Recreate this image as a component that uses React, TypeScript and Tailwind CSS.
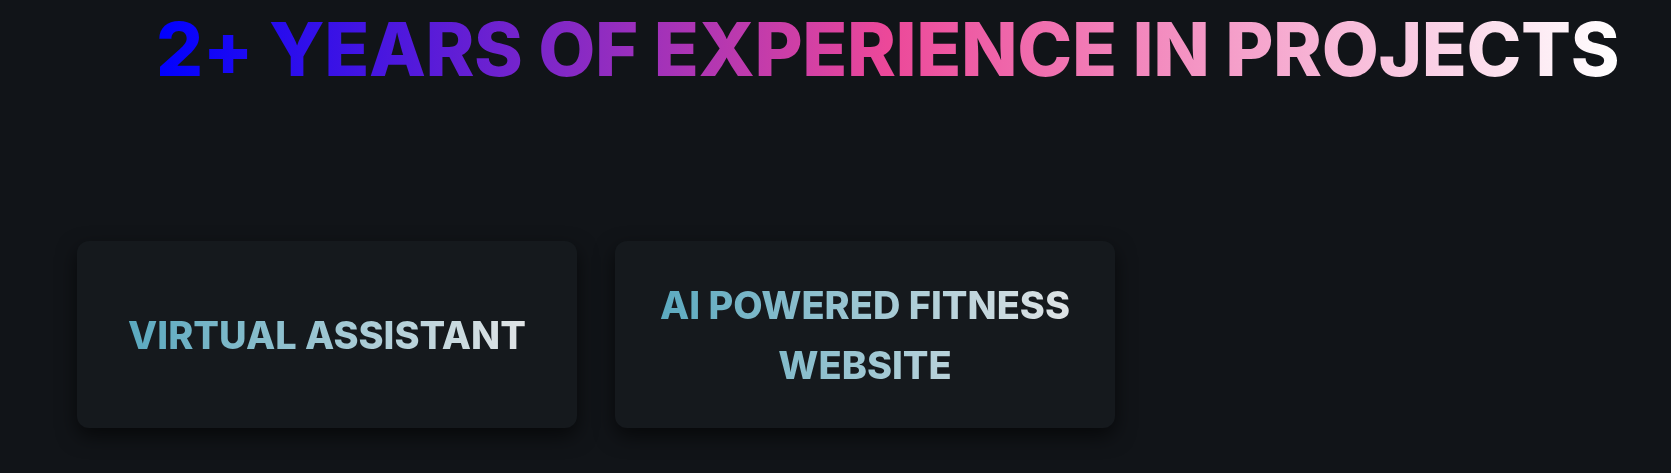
const projects = ['Virtual Assistant', 'AI Powered Fitness Website'];

export default function App() {
  return (
    <main
      className="min-h-screen w-full bg-[#111418] overflow-hidden"
      style={{ fontFamily: 'Inter, "Open Sans", sans-serif' }}
    >
      <header className="pl-[156px] pt-[6px]">
        <h1 className="inline-block bg-[linear-gradient(to_right,#0000ff,#ec4899,#ffffff)] bg-clip-text text-transparent text-[74px] font-extrabold uppercase leading-[86px] tracking-[-0.4px] whitespace-nowrap">
          2+ years of experience in projects
        </h1>
      </header>

      {/* project cards */}
      <section className="flex gap-[38px] pl-[77px] pt-[149px]">
        {projects.map((p) => (
          <div
            key={p}
            className="w-[500px] h-[187px] flex items-center justify-center px-[40px] rounded-xl bg-[#15191d] shadow-[0_8px_20px_rgba(0,0,0,0.6)]"
          >
            <h3 className="inline-block text-center bg-[linear-gradient(to_right,#5aa9bf,#e1e4e6)] bg-clip-text text-transparent text-[38px] font-extrabold uppercase leading-[60px]">
              {p}
            </h3>
          </div>
        ))}
      </section>
    </main>
  );
}
